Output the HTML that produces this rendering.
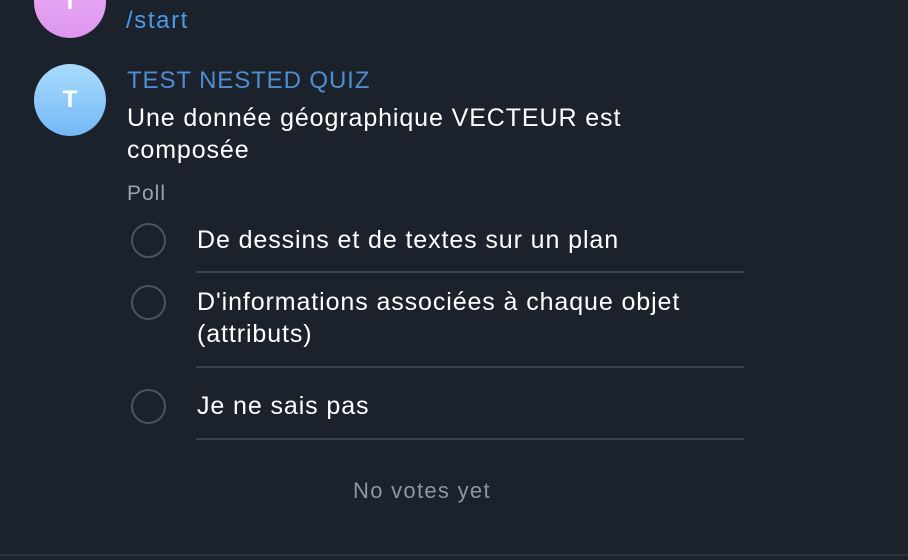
<!DOCTYPE html>
<html><head><style>
body{margin:0;width:908px;height:560px;background:#1c222c;position:relative;overflow:hidden;font-family:"Liberation Sans",sans-serif;}
.a{position:absolute;}
.av{position:absolute;width:72px;height:72px;border-radius:50%;color:#fff;font-weight:bold;font-size:24px;text-align:center;line-height:72px;}
.c{position:absolute;left:131px;width:31px;height:31px;border:2px solid #4b5560;border-radius:50%;}
.t{position:absolute;left:197px;color:#fff;font-size:25px;letter-spacing:0.9px;line-height:32px;white-space:nowrap;}
.s{position:absolute;left:196px;width:548px;height:2px;background:#3a424c;}
</style></head><body>
<div class="av" style="left:34px;top:-34px;background:linear-gradient(#f0b0f4,#dc96ee);">T</div>
<div class="a" style="left:126px;top:7px;color:#4a9ae6;font-size:24px;letter-spacing:1.6px;">/start</div>
<div class="av" style="left:34px;top:64px;background:linear-gradient(#a9dcfb,#74b8f8);">T</div>
<div class="a" style="left:127px;top:67px;color:#4f8dd2;font-size:24px;letter-spacing:0.9px;">TEST NESTED QUIZ</div>
<div class="a" style="left:127px;top:102px;color:#fff;font-size:25px;letter-spacing:0.9px;line-height:32px;white-space:nowrap;">Une donnée géographique VECTEUR est<br>composée</div>
<div class="a" style="left:127px;top:182px;color:#9aa4b0;font-size:21px;letter-spacing:1px;">Poll</div>
<div class="c" style="top:223px"></div>
<div class="t" style="top:224px">De dessins et de textes sur un plan</div>
<div class="s" style="top:271px"></div>
<div class="c" style="top:285px"></div>
<div class="t" style="top:286px">D'informations associées à chaque objet<br>(attributs)</div>
<div class="s" style="top:366px"></div>
<div class="c" style="top:389px"></div>
<div class="t" style="top:390px">Je ne sais pas</div>
<div class="s" style="top:438px"></div>
<div class="a" style="left:353px;top:478px;color:#8b96a5;font-size:22px;letter-spacing:1.3px;">No votes yet</div>
<div class="a" style="left:0;top:554px;width:908px;height:2px;background:#2a323c;"></div>
</body></html>
